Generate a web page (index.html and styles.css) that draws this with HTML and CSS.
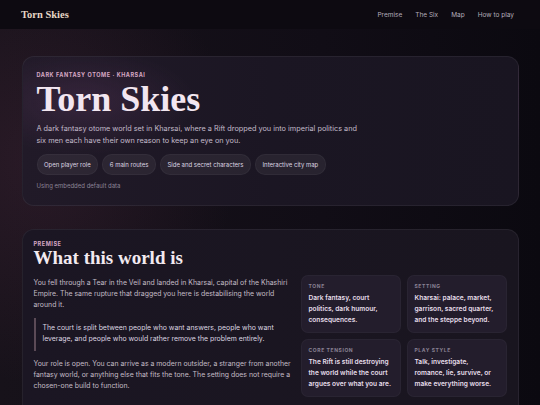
FILE: index.html
```html
<!DOCTYPE html>
<html lang="en">
<head>
    <meta charset="UTF-8">
    <meta name="viewport" content="width=device-width, initial-scale=1.0">
    <title>Torn Skies</title>
    <link rel="stylesheet" href="styles.css">
</head>
<body>
    <header class="topbar">
        <span class="brand">Torn Skies</span>
        <nav class="nav">
            <a href="#premise">Premise</a>
            <a href="#six">The Six</a>
            <a href="#map">Map</a>
            <a href="#play">How to play</a>
        </nav>
    </header>

    <main class="page">
        <section class="card hero">
            <div class="eyebrow">Dark fantasy otome · Kharsai</div>
            <h1 class="hero-title">Torn Skies</h1>
            <p class="hero-lead">A dark fantasy otome world set in Kharsai, where a Rift dropped you into imperial politics and six men each have their own reason to keep an eye on you.</p>
            <div class="chips">
                <span class="chip">Open player role</span>
                <span class="chip">6 main routes</span>
                <span class="chip">Side and secret characters</span>
                <span class="chip">Interactive city map</span>
            </div>
            <div class="data-note">Using embedded default data</div>
        </section>

        <section class="card section" id="premise">
            <div class="eyebrow">Premise</div>
            <h2 class="section-title">What this world is</h2>
            <div class="premise-grid">
                <div class="premise-text">
                    <p>You fell through a Tear in the Veil and landed in Kharsai, capital of the Khashiri Empire. The same rupture that dragged you here is destabilising the world around it.</p>
                    <blockquote>The court is split between people who want answers, people who want leverage, and people who would rather remove the problem entirely.</blockquote>
                    <p>Your role is open. You can arrive as a modern outsider, a stranger from another fantasy world, or anything else that fits the tone. The setting does not require a chosen-one build to function.</p>
                </div>
                <div class="facts">
                    <div class="fact">
                        <div class="fact-label">Tone</div>
                        <div class="fact-body">Dark fantasy, court politics, dark humour, consequences.</div>
                    </div>
                    <div class="fact">
                        <div class="fact-label">Setting</div>
                        <div class="fact-body">Kharsai: palace, market, garrison, sacred quarter, and the steppe beyond.</div>
                    </div>
                    <div class="fact">
                        <div class="fact-label">Core tension</div>
                        <div class="fact-body">The Rift is still destroying the world while the court argues over what you are.</div>
                    </div>
                    <div class="fact">
                        <div class="fact-label">Play style</div>
                        <div class="fact-body">Talk, investigate, romance, lie, survive, or make everything worse.</div>
                    </div>
                </div>
            </div>
        </section>
    </main>
</body>
</html>
```

FILE: styles.css
```css
body {
    margin: 0;
    padding: 0;
    font-family: Inter, "Noto Sans", sans-serif;
    color: #c4bcc9;
    background:
        radial-gradient(ellipse 280px 320px at 40px 160px, rgba(110, 55, 85, 0.22), transparent 70%),
        linear-gradient(90deg, #17121a 0%, #110d16 60%, #0b0910 100%);
    min-height: 405px;
}
.topbar {
    height: 29px;
    padding: 0 26px 0 21px;
    background-color: #0d0a11;
    display: flex;
    justify-content: space-between;
    align-items: center;
}
.brand {
    font-family: "Liberation Serif", serif;
    font-weight: bold;
    font-size: 10.5px;
    color: #e6d6c6;
}
.nav {
    display: flex;
    gap: 13px;
}
.nav a {
    font-size: 6.5px;
    color: #b4adbb;
    text-decoration: none;
}
.page {
    padding: 27px 21.5px 0;
    display: flex;
    flex-direction: column;
    gap: 23px;
}
.card {
    border: 1px solid rgba(255, 255, 255, 0.06);
    border-radius: 12px;
    background-color: #1a1521;
}
.hero {
    padding: 15px 14px 11px;
    height: 122px;
    background:
        radial-gradient(ellipse 150px 70px at 60px 45px, rgba(120, 70, 120, 0.25), transparent 75%),
        linear-gradient(90deg, #211a28 0%, #1b1623 50%, #191521 100%);
}
.eyebrow {
    font-size: 5.5px;
    font-weight: 700;
    letter-spacing: 0.1em;
    text-transform: uppercase;
    color: #d6a8c4;
}
.hero-title {
    margin: 1px 0 0;
    font-family: "Liberation Serif", serif;
    font-size: 36px;
    font-weight: bold;
    line-height: 40px;
    color: #f2e6f0;
}
.hero-lead {
    margin: 4px 0 0;
    font-size: 7.3px;
    line-height: 11.5px;
    color: #c3bbca;
    max-width: 330px;
}
.chips {
    margin-top: 8px;
    display: flex;
    gap: 4px;
}
.chip {
    height: 19px;
    padding: 0 6.5px;
    display: flex;
    align-items: center;
    border-radius: 10px;
    background-color: rgba(255, 255, 255, 0.06);
    border: 1px solid rgba(255, 255, 255, 0.04);
    font-size: 6px;
    color: #ddd5e2;
}
.data-note {
    margin-top: 7px;
    font-size: 6px;
    color: #8c8496;
}
.section {
    padding: 11px 11px 20px 11px;
    background: linear-gradient(90deg, #1b1623 0%, #19151f 100%);
}
.section-title {
    margin: 0;
    font-family: "Liberation Serif", serif;
    font-size: 19px;
    font-weight: bold;
    line-height: 22px;
    color: #f2eaf0;
}
.premise-grid {
    margin-top: 6px;
    display: grid;
    grid-template-columns: 258px 1fr;
    gap: 9px;
}
.premise-text {
    padding-top: 3px;
}
.premise-text p {
    margin: 0;
    font-size: 6.9px;
    line-height: 10.8px;
    color: #c4bcc6;
}
.premise-text blockquote {
    margin: 8px 0 8px;
    padding: 5px 0 6px 7px;
    border-left: 2px solid #5b4a56;
    font-size: 6.9px;
    line-height: 10.8px;
    color: #ddd5e0;
}
.facts {
    display: grid;
    grid-template-columns: 1fr 1fr;
    gap: 6px;
}
.fact {
    padding: 7px 7px 6px;
    border-radius: 7px;
    background-color: #231d2c;
    border: 1px solid rgba(255, 255, 255, 0.03);
}
.fact-label {
    font-size: 5px;
    font-weight: 700;
    letter-spacing: 0.12em;
    text-transform: uppercase;
    color: #8a8294;
}
.fact-body {
    margin-top: 4px;
    font-size: 6.6px;
    font-weight: 600;
    line-height: 11px;
    color: #e6deea;
}
```
